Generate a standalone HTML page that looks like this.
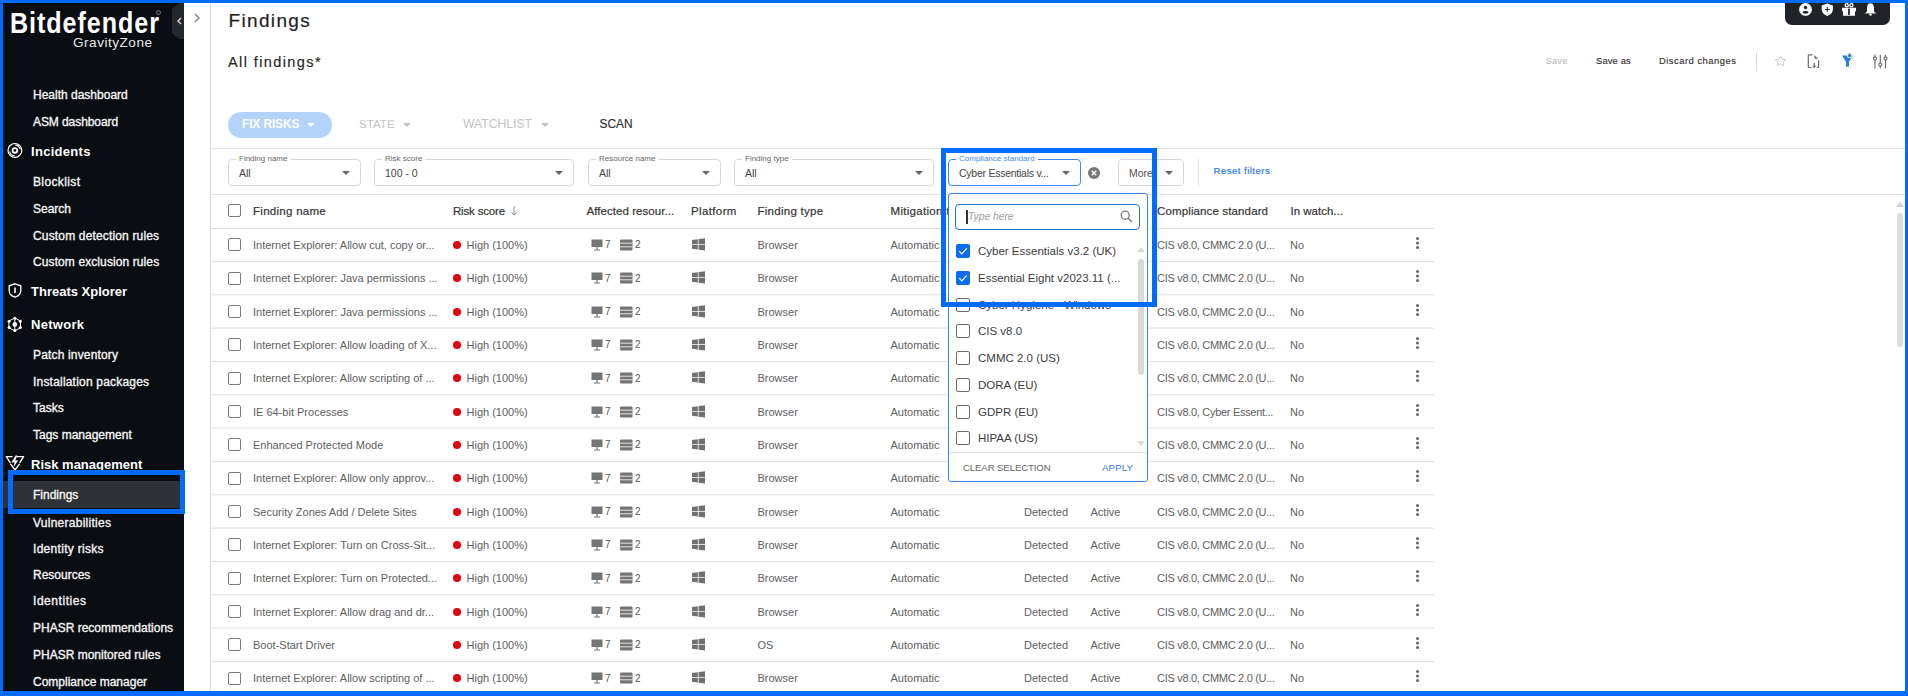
<!DOCTYPE html>
<html><head><meta charset="utf-8">
<style>
*{margin:0;padding:0;box-sizing:border-box}
html,body{width:1908px;height:696px;overflow:hidden;background:#fff;font-family:"Liberation Sans",sans-serif}
.a{position:absolute;white-space:nowrap}
#frame{position:absolute;left:0;top:0;width:1908px;height:696px;border-style:solid;border-color:#006cff;border-width:3px 3px 5px 3px;z-index:50;pointer-events:none}
#side{position:absolute;left:0;top:0;width:184px;height:696px;background:#0a0d12}
.si{position:absolute;left:33px;height:16px;line-height:16px;font-size:12px;color:#f4f4f4;white-space:nowrap;-webkit-text-stroke:0.35px #f4f4f4}
.sh{position:absolute;left:31px;height:18px;line-height:18px;font-size:13px;font-weight:bold;color:#fff;white-space:nowrap}
.ic{position:absolute}
.hl{position:absolute;border:5px solid #006cff;z-index:40}
.row{position:absolute;left:211px;width:1223px;height:34px;border-bottom:1px solid #e3e3e3}
.t{position:absolute;height:16px;line-height:16px;font-size:11px;color:#606060;white-space:nowrap}
.th{position:absolute;height:16px;line-height:16px;font-size:11.5px;color:#333;-webkit-text-stroke:0.2px #333;white-space:nowrap}
.cb{position:absolute;width:13px;height:13px;border:1.5px solid #7a7a7a;border-radius:2px;background:#fff}
.fs{position:absolute;top:159px;height:27px;border:1px solid #d6d6d6;border-radius:4px;background:#fff}
.fl{position:absolute;top:-6px;left:7px;padding:0 3px;background:#fff;font-size:8px;line-height:10px;color:#666;white-space:nowrap}
.fv{position:absolute;left:10px;top:6px;font-size:10.5px;line-height:14px;color:#444;white-space:nowrap}
.arr{position:absolute;width:0;height:0;border-left:5px solid transparent;border-right:5px solid transparent;border-top:5px solid #555}
</style></head><body>

<div id="frame"></div>
<div id="side">
<div class="a" style="left:10px;top:5px;font-size:29.5px;line-height:36px;font-weight:bold;color:#fff;letter-spacing:1.1px;transform:scaleX(0.852);transform-origin:0 0">Bitdefender</div>
<div class="a" style="left:156px;top:10px;width:5px;height:5px;border:0.7px solid #777;border-radius:50%"></div>
<div class="a" style="left:73px;top:34.3px;font-size:13.6px;line-height:18px;color:#e6e6e6;letter-spacing:0.5px">GravityZone</div>
<svg class="ic" style="left:172px;top:3px" width="12" height="36" viewBox="0 0 12 36"><path d="M12 0 L12 36 L7 36 L0 30 L0 6 L7 0 Z" fill="#24272c"/><path d="M9 15 L6 18 L9 21" stroke="#c8c8c8" stroke-width="1.6" fill="none"/></svg>
<div class="si" style="top:86.7px">Health dashboard</div>
<div class="si" style="top:113.5px;letter-spacing:-0.08px">ASM dashboard</div>
<div class="sh" style="top:142.5px;letter-spacing:0.3px">Incidents</div>
<div class="si" style="top:174.3px;letter-spacing:0.37px">Blocklist</div>
<div class="si" style="top:200.9px">Search</div>
<div class="si" style="top:227.5px;letter-spacing:0.16px">Custom detection rules</div>
<div class="si" style="top:254.1px;letter-spacing:0.1px">Custom exclusion rules</div>
<div class="sh" style="top:282.5px">Threats Xplorer</div>
<div class="sh" style="top:316.4px;letter-spacing:0.3px">Network</div>
<div class="si" style="top:347.0px;letter-spacing:0.16px">Patch inventory</div>
<div class="si" style="top:373.7px;letter-spacing:0.2px">Installation packages</div>
<div class="si" style="top:400.4px">Tasks</div>
<div class="si" style="top:427.1px">Tags management</div>
<div class="sh" style="top:456.2px">Risk management</div>
<div class="a" style="left:0;top:481px;width:184px;height:27px;background:#2e3135"></div>
<div class="si" style="top:486.6px">Findings</div>
<div class="si" style="top:514.7px;letter-spacing:0.26px">Vulnerabilities</div>
<div class="si" style="top:540.5px;letter-spacing:0.3px">Identity risks</div>
<div class="si" style="top:566.7px">Resources</div>
<div class="si" style="top:593.4px;letter-spacing:0.55px">Identities</div>
<div class="si" style="top:620.1px">PHASR recommendations</div>
<div class="si" style="top:646.8px">PHASR monitored rules</div>
<div class="si" style="top:673.5px">Compliance manager</div>
<svg class="ic" style="left:3px;top:138px" width="25" height="25" viewBox="3 138 25 25"><circle cx="14.9" cy="150.4" r="6.9" stroke="#fff" stroke-width="1.2" fill="none"/><circle cx="14.9" cy="150.4" r="2.35" stroke="#fff" stroke-width="1.8" fill="none"/><path d="M9.6 151.5 A5.3 5.3 0 0 0 14.6 155.7" stroke="#fff" stroke-width="1.2" fill="none"/><path d="M20.2 149.3 A5.3 5.3 0 0 0 15.2 145.1" stroke="#fff" stroke-width="1.2" fill="none"/></svg>
<svg class="ic" style="left:8px;top:283px" width="14" height="15" viewBox="0 0 14 15"><path d="M7 0.8 L12.8 2.8 L12.8 7.5 C12.8 10.8 10.2 13.2 7 14.2 C3.8 13.2 1.2 10.8 1.2 7.5 L1.2 2.8 Z" stroke="#fff" stroke-width="1.3" fill="none"/><path d="M7 4.5 L7 10" stroke="#fff" stroke-width="1.6"/></svg>
<svg class="ic" style="left:4px;top:313px" width="22" height="22" viewBox="4 313 22 22"><path d="M14.8 317.9 L20.5 321.1 L20.5 327.7 L14.8 330.9 L8.9 327.7 L8.9 321.1 Z M14.8 317.9 L14.8 330.9" stroke="#fff" stroke-width="1" fill="none"/><circle cx="14.8" cy="324.4" r="2.3" fill="#fff"/><circle cx="14.8" cy="318.2" r="1.5" fill="#fff"/><circle cx="20.3" cy="321.3" r="1.5" fill="#fff"/><circle cx="20.3" cy="327.5" r="1.5" fill="#fff"/><circle cx="14.8" cy="330.6" r="1.5" fill="#fff"/><circle cx="9.1" cy="327.5" r="1.5" fill="#fff"/><circle cx="9.1" cy="321.3" r="1.5" fill="#fff"/></svg>
<svg class="ic" style="left:3px;top:450px" width="25" height="25" viewBox="3 450 25 25"><path d="M6.4 456.6 L11.9 456.6 M17.6 456.6 L23.5 456.6 M6.6 457 L9.9 462.2 M10.8 464.3 L15 469.8 L19.2 464.3 M20.1 462.2 L23.3 457" stroke="#fff" stroke-width="1.35" fill="none" stroke-linecap="square"/><path d="M15.6 455.6 L11.4 462.4 L14.6 462.2 L13.4 467.4 L18.2 460.3 L15.2 460.4 L17.3 455.6 Z" fill="#fff"/></svg>
</div>
<div class="hl" style="left:8px;top:470px;width:177px;height:44px"></div>
<div class="a" style="left:210px;top:0;width:1px;height:696px;background:#dcdcdc"></div>
<svg class="ic" style="left:193px;top:13px" width="8" height="10" viewBox="0 0 8 10"><path d="M2 1 L6 5 L2 9" stroke="#8a8a8a" stroke-width="1.5" fill="none"/></svg>
<div class="a" style="left:228.5px;top:8.3px;font-size:19px;line-height:26px;color:#1f1f1f;letter-spacing:1.35px;-webkit-text-stroke:0.2px #1f1f1f">Findings</div>
<div class="a" style="left:228px;top:51.5px;font-size:14.5px;line-height:20px;color:#1f1f1f;letter-spacing:1.4px;-webkit-text-stroke:0.15px #1f1f1f">All findings*</div>
<div class="a" style="left:1545.5px;top:53.6px;font-size:9.4px;line-height:14px;color:#b4b4b4;letter-spacing:0.2px">Save</div>
<div class="a" style="left:1596px;top:53.6px;font-size:9.4px;line-height:14px;color:#333;letter-spacing:0.15px;-webkit-text-stroke:0.15px #333">Save as</div>
<div class="a" style="left:1659px;top:53.6px;font-size:9.4px;line-height:14px;color:#333;letter-spacing:0.5px;-webkit-text-stroke:0.15px #333">Discard changes</div>
<div class="a" style="left:1756px;top:53px;width:1px;height:18px;background:#d8d8d8"></div>
<svg class="ic" style="left:1774px;top:55px" width="13" height="12" viewBox="0 0 13 12"><path d="M6.5 0.8 L8.1 4.3 L11.9 4.6 L9 7.1 L9.9 10.9 L6.5 8.9 L3.1 10.9 L4 7.1 L1.1 4.6 L4.9 4.3 Z" stroke="#c6c6c6" stroke-width="0.9" fill="none"/></svg>
<svg class="ic" style="left:1804px;top:50px" width="20" height="20" viewBox="1804 50 20 20"><path d="M1812.6 54.9 L1808.9 54.9 Q1808.3 54.9 1808.3 55.5 L1808.3 66.9 Q1808.3 67.5 1808.9 67.5 L1811.6 67.5 M1818.6 60.2 L1818.6 66.9 Q1818.6 67.5 1818 67.5 L1817 67.5" stroke="#6e6e6e" stroke-width="1.2" fill="none"/><path d="M1814.1 55.1 L1818.5 58.8 L1814.6 58.8 Z" fill="#6e6e6e"/><path d="M1814.3 63 L1814.3 66.5" stroke="#6e6e6e" stroke-width="1.3"/><path d="M1812.4 65.8 L1816.2 65.8 L1814.3 68.6 Z" fill="#6e6e6e"/></svg>
<svg class="ic" style="left:1838px;top:50px" width="20" height="20" viewBox="1838 50 20 20"><path d="M1842 55.5 L1853 55.5 L1849 61.8 L1849 66.8 L1846 66.8 L1846 61.8 Z" fill="#2a7de1"/><path d="M1847.1 55.2 A2.5 2.5 0 0 0 1852.1 55.2" stroke="#fff" stroke-width="1" fill="none"/><circle cx="1849.6" cy="55.1" r="1.5" fill="#2a7de1"/></svg>
<svg class="ic" style="left:1873px;top:54px" width="15" height="15" viewBox="0 0 15 15"><path d="M2 0.8 L2 14.5 M7.3 0.8 L7.3 14.5 M12.5 0.8 L12.5 14.5" stroke="#6a6a6a" stroke-width="1.15"/><circle cx="2" cy="4.4" r="1.55" fill="#fff" stroke="#6a6a6a" stroke-width="1.1"/><circle cx="7.3" cy="10.6" r="1.55" fill="#fff" stroke="#6a6a6a" stroke-width="1.1"/><circle cx="12.5" cy="4.4" r="1.55" fill="#fff" stroke="#6a6a6a" stroke-width="1.1"/></svg>
<div class="a" style="left:1785px;top:0;width:105px;height:25px;background:#202328;border-radius:0 0 7px 7px"></div>
<svg class="ic" style="left:1790px;top:0px" width="95" height="22" viewBox="1790 0 95 22"><circle cx="1805.5" cy="9.45" r="6.4" fill="#fff"/><circle cx="1805.5" cy="7.5" r="1.7" fill="#202328"/><ellipse cx="1805.5" cy="12.3" rx="2.9" ry="1.35" fill="#202328"/><path d="M1827.3 3.6 L1832.9 5.4 L1832.9 9.6 C1832.9 12.6 1830.6 14.9 1827.3 15.9 C1824 14.9 1821.7 12.6 1821.7 9.6 L1821.7 5.4 Z" fill="#fff"/><path d="M1827.3 7 L1827.3 12 M1824.9 9.5 L1829.7 9.5" stroke="#202328" stroke-width="1"/><path d="M1842 7.8 L1856 7.8 L1856 11.2 L1855 11.2 L1855 15.8 L1843 15.8 L1843 11.2 L1842 11.2 Z" fill="#fff"/><rect x="1848.1" y="8.6" width="1.8" height="6.3" fill="#202328"/><circle cx="1846.7" cy="5.3" r="1.6" stroke="#fff" stroke-width="1.3" fill="none"/><circle cx="1851.4" cy="5.3" r="1.6" stroke="#fff" stroke-width="1.3" fill="none"/><path d="M1870.5 3.3 C1867.6 3.3 1867 6.5 1867 8.5 L1867 11.3 L1865 13.5 L1876 13.5 L1874 11.3 L1874 8.5 C1874 6.5 1873.4 3.3 1870.5 3.3 Z" fill="#fff"/><circle cx="1870.5" cy="14.6" r="1.2" fill="#fff"/></svg>
<div class="a" style="left:228px;top:112px;width:104px;height:26px;background:#b3d3fb;border-radius:13px"></div>
<div class="a" style="left:242px;top:115px;font-size:11.9px;line-height:18px;font-weight:bold;color:#fff;letter-spacing:-0.1px">FIX RISKS</div>
<div class="arr" style="left:307px;top:123px;border-top-color:#fff;border-left-width:4px;border-right-width:4px;border-top-width:4px"></div>
<div class="a" style="left:359px;top:115px;font-size:11.6px;line-height:18px;color:#c2c2c2">STATE</div>
<div class="arr" style="left:403px;top:123px;border-top-color:#c2c2c2;border-left-width:4px;border-right-width:4px;border-top-width:4px"></div>
<div class="a" style="left:463px;top:115px;font-size:12.2px;line-height:18px;color:#c2c2c2">WATCHLIST</div>
<div class="arr" style="left:541px;top:123px;border-top-color:#c2c2c2;border-left-width:4px;border-right-width:4px;border-top-width:4px"></div>
<div class="a" style="left:599.5px;top:115px;font-size:11.9px;line-height:18px;color:#333;-webkit-text-stroke:0.2px #333">SCAN</div>
<div class="a" style="left:211px;top:148px;width:1694px;height:1px;background:#e2e2e2"></div>
<div class="a" style="left:211px;top:194px;width:1694px;height:1px;background:#e2e2e2"></div>
<div class="fs" style="left:228px;width:133px;border-color:#d6d6d6"><div class="fl" style="color:#666">Finding name</div><div class="fv">All</div><div class="arr" style="left:113px;top:11px;border-left-width:4.5px;border-right-width:4.5px;border-top-width:4.5px;border-top-color:#666"></div></div>
<div class="fs" style="left:374px;width:200px;border-color:#d6d6d6"><div class="fl" style="color:#666">Risk score</div><div class="fv">100 - 0</div><div class="arr" style="left:180px;top:11px;border-left-width:4.5px;border-right-width:4.5px;border-top-width:4.5px;border-top-color:#666"></div></div>
<div class="fs" style="left:588px;width:133px;border-color:#d6d6d6"><div class="fl" style="color:#666">Resource name</div><div class="fv">All</div><div class="arr" style="left:113px;top:11px;border-left-width:4.5px;border-right-width:4.5px;border-top-width:4.5px;border-top-color:#666"></div></div>
<div class="fs" style="left:734px;width:200px;border-color:#d6d6d6"><div class="fl" style="color:#666">Finding type</div><div class="fv">All</div><div class="arr" style="left:180px;top:11px;border-left-width:4.5px;border-right-width:4.5px;border-top-width:4.5px;border-top-color:#666"></div></div>
<div class="fs" style="left:1118px;width:66px;border-color:#d6d6d6"><div class="fl" style="color:#666"></div><div class="fv" style="color:#555">More</div><div class="arr" style="left:46px;top:11px;border-left-width:4.5px;border-right-width:4.5px;border-top-width:4.5px;border-top-color:#666"></div></div>
<div class="fs" style="left:948px;width:133px;border-color:#3d8ae8"><div class="fl" style="color:#3d8ae8">Compliance standard</div><div class="fv" style="letter-spacing:-0.25px">Cyber Essentials v...</div><div class="arr" style="left:113px;top:11px;border-left-width:4.5px;border-right-width:4.5px;border-top-width:4.5px;border-top-color:#666"></div></div>
<svg class="ic" style="left:1088px;top:167px" width="12" height="12" viewBox="0 0 12 12"><circle cx="6" cy="6" r="6" fill="#777"/><path d="M3.8 3.8 L8.2 8.2 M8.2 3.8 L3.8 8.2" stroke="#fff" stroke-width="1.5"/></svg>
<div class="a" style="left:1198px;top:159px;width:1px;height:27px;background:#e0e0e0"></div>
<div class="a" style="left:1213.5px;top:163px;font-size:9.7px;line-height:15px;color:#1f74f2;letter-spacing:0.43px;-webkit-text-stroke:0.15px #1f74f2">Reset filters</div>
<div class="cb" style="left:228px;top:204px"></div>
<div class="th" style="left:253px;top:203px;letter-spacing:0.28px">Finding name</div>
<div class="th" style="left:453px;top:203px;letter-spacing:-0.18px">Risk score</div>
<div class="th" style="left:586.5px;top:203px;letter-spacing:0.05px">Affected resour...</div>
<div class="th" style="left:691px;top:203px;letter-spacing:0.37px">Platform</div>
<div class="th" style="left:757.5px;top:203px;letter-spacing:0.27px">Finding type</div>
<div class="th" style="left:890.5px;top:203px;letter-spacing:0.3px">Mitigation type</div>
<div class="th" style="left:1024px;top:203px;letter-spacing:0px">Detection</div>
<div class="th" style="left:1090px;top:203px;letter-spacing:0px">State</div>
<div class="th" style="left:1157px;top:203px;letter-spacing:0.13px">Compliance standard</div>
<div class="th" style="left:1290.5px;top:203px;letter-spacing:0px">In watch...</div>
<svg class="ic" style="left:508px;top:204px" width="12" height="14" viewBox="508 204 12 14"><path d="M514 206.3 L514 215 M511.7 212.6 L514 215.2 L516.3 212.6" stroke="#8a8a8a" stroke-width="1" fill="none"/></svg>
<div class="a" style="left:211px;top:228px;width:1223px;height:1px;background:rgba(200,200,200,0.62)"></div>
<div class="cb" style="left:228px;top:238.4px"></div>
<div class="t" style="left:253px;top:236.9px">Internet Explorer: Allow cut, copy or...</div>
<div class="a" style="left:453px;top:240.9px;width:8px;height:8px;border-radius:50%;background:#e40010"></div>
<div class="t" style="left:466.5px;top:236.9px">High (100%)</div>
<svg class="ic" style="left:591px;top:238.9px" width="50" height="12" viewBox="0 0 50 12"><rect x="0.5" y="0.5" width="11" height="7.5" fill="#747474"/><path d="M6 8 L6 10.5 M3 11 L9 11" stroke="#747474" stroke-width="1.2"/><rect x="29" y="0.5" width="12.5" height="11" rx="1" fill="#747474"/><path d="M29 4.2 L41.5 4.2 M29 7.8 L41.5 7.8" stroke="#fff" stroke-width="0.8"/></svg>
<div class="t" style="left:605px;top:237.4px;font-size:10px;color:#555">7</div>
<div class="t" style="left:635px;top:237.4px;font-size:10px;color:#555">2</div>
<svg class="ic" style="left:692px;top:237.9px" width="13" height="13" viewBox="0 0 13 13"><path d="M0 2 L5.8 1.2 L5.8 6 L0 6 Z M6.6 1.1 L13 0.2 L13 6 L6.6 6 Z M0 6.8 L5.8 6.8 L5.8 11.6 L0 10.8 Z M6.6 6.8 L13 6.8 L13 12.6 L6.6 11.7 Z" fill="#707070"/></svg>
<div class="t" style="left:757.5px;top:236.9px">Browser</div>
<div class="t" style="left:890.5px;top:236.9px">Automatic</div>
<div class="t" style="left:1157px;top:236.9px;letter-spacing:-0.3px">CIS v8.0, CMMC 2.0 (U...</div>
<div class="t" style="left:1290px;top:236.9px">No</div>
<svg class="ic" style="left:1414.5px;top:234.9px" width="5" height="16" viewBox="0 0 5 16"><circle cx="2.5" cy="3.5" r="1.55" fill="#6a6a6a"/><circle cx="2.5" cy="8" r="1.55" fill="#6a6a6a"/><circle cx="2.5" cy="12.5" r="1.55" fill="#6a6a6a"/></svg>
<div class="a" style="left:211px;top:260px;width:1223px;height:1px;background:rgba(200,200,200,0.04)"></div>
<div class="a" style="left:211px;top:261px;width:1223px;height:1px;background:rgba(200,200,200,0.58)"></div>
<div class="cb" style="left:228px;top:271.8px"></div>
<div class="t" style="left:253px;top:270.3px">Internet Explorer: Java permissions ...</div>
<div class="a" style="left:453px;top:274.3px;width:8px;height:8px;border-radius:50%;background:#e40010"></div>
<div class="t" style="left:466.5px;top:270.3px">High (100%)</div>
<svg class="ic" style="left:591px;top:272.3px" width="50" height="12" viewBox="0 0 50 12"><rect x="0.5" y="0.5" width="11" height="7.5" fill="#747474"/><path d="M6 8 L6 10.5 M3 11 L9 11" stroke="#747474" stroke-width="1.2"/><rect x="29" y="0.5" width="12.5" height="11" rx="1" fill="#747474"/><path d="M29 4.2 L41.5 4.2 M29 7.8 L41.5 7.8" stroke="#fff" stroke-width="0.8"/></svg>
<div class="t" style="left:605px;top:270.8px;font-size:10px;color:#555">7</div>
<div class="t" style="left:635px;top:270.8px;font-size:10px;color:#555">2</div>
<svg class="ic" style="left:692px;top:271.3px" width="13" height="13" viewBox="0 0 13 13"><path d="M0 2 L5.8 1.2 L5.8 6 L0 6 Z M6.6 1.1 L13 0.2 L13 6 L6.6 6 Z M0 6.8 L5.8 6.8 L5.8 11.6 L0 10.8 Z M6.6 6.8 L13 6.8 L13 12.6 L6.6 11.7 Z" fill="#707070"/></svg>
<div class="t" style="left:757.5px;top:270.3px">Browser</div>
<div class="t" style="left:890.5px;top:270.3px">Automatic</div>
<div class="t" style="left:1157px;top:270.3px;letter-spacing:-0.3px">CIS v8.0, CMMC 2.0 (U...</div>
<div class="t" style="left:1290px;top:270.3px">No</div>
<svg class="ic" style="left:1414.5px;top:268.3px" width="5" height="16" viewBox="0 0 5 16"><circle cx="2.5" cy="3.5" r="1.55" fill="#6a6a6a"/><circle cx="2.5" cy="8" r="1.55" fill="#6a6a6a"/><circle cx="2.5" cy="12.5" r="1.55" fill="#6a6a6a"/></svg>
<div class="a" style="left:211px;top:294px;width:1223px;height:1px;background:rgba(200,200,200,0.46)"></div>
<div class="a" style="left:211px;top:295px;width:1223px;height:1px;background:rgba(200,200,200,0.16)"></div>
<div class="cb" style="left:228px;top:305.1px"></div>
<div class="t" style="left:253px;top:303.6px">Internet Explorer: Java permissions ...</div>
<div class="a" style="left:453px;top:307.6px;width:8px;height:8px;border-radius:50%;background:#e40010"></div>
<div class="t" style="left:466.5px;top:303.6px">High (100%)</div>
<svg class="ic" style="left:591px;top:305.6px" width="50" height="12" viewBox="0 0 50 12"><rect x="0.5" y="0.5" width="11" height="7.5" fill="#747474"/><path d="M6 8 L6 10.5 M3 11 L9 11" stroke="#747474" stroke-width="1.2"/><rect x="29" y="0.5" width="12.5" height="11" rx="1" fill="#747474"/><path d="M29 4.2 L41.5 4.2 M29 7.8 L41.5 7.8" stroke="#fff" stroke-width="0.8"/></svg>
<div class="t" style="left:605px;top:304.1px;font-size:10px;color:#555">7</div>
<div class="t" style="left:635px;top:304.1px;font-size:10px;color:#555">2</div>
<svg class="ic" style="left:692px;top:304.6px" width="13" height="13" viewBox="0 0 13 13"><path d="M0 2 L5.8 1.2 L5.8 6 L0 6 Z M6.6 1.1 L13 0.2 L13 6 L6.6 6 Z M0 6.8 L5.8 6.8 L5.8 11.6 L0 10.8 Z M6.6 6.8 L13 6.8 L13 12.6 L6.6 11.7 Z" fill="#707070"/></svg>
<div class="t" style="left:757.5px;top:303.6px">Browser</div>
<div class="t" style="left:890.5px;top:303.6px">Automatic</div>
<div class="t" style="left:1157px;top:303.6px;letter-spacing:-0.3px">CIS v8.0, CMMC 2.0 (U...</div>
<div class="t" style="left:1290px;top:303.6px">No</div>
<svg class="ic" style="left:1414.5px;top:301.6px" width="5" height="16" viewBox="0 0 5 16"><circle cx="2.5" cy="3.5" r="1.55" fill="#6a6a6a"/><circle cx="2.5" cy="8" r="1.55" fill="#6a6a6a"/><circle cx="2.5" cy="12.5" r="1.55" fill="#6a6a6a"/></svg>
<div class="a" style="left:211px;top:327px;width:1223px;height:1px;background:rgba(200,200,200,0.25)"></div>
<div class="a" style="left:211px;top:328px;width:1223px;height:1px;background:rgba(200,200,200,0.37)"></div>
<div class="cb" style="left:228px;top:338.4px"></div>
<div class="t" style="left:253px;top:336.9px">Internet Explorer: Allow loading of X...</div>
<div class="a" style="left:453px;top:340.9px;width:8px;height:8px;border-radius:50%;background:#e40010"></div>
<div class="t" style="left:466.5px;top:336.9px">High (100%)</div>
<svg class="ic" style="left:591px;top:338.9px" width="50" height="12" viewBox="0 0 50 12"><rect x="0.5" y="0.5" width="11" height="7.5" fill="#747474"/><path d="M6 8 L6 10.5 M3 11 L9 11" stroke="#747474" stroke-width="1.2"/><rect x="29" y="0.5" width="12.5" height="11" rx="1" fill="#747474"/><path d="M29 4.2 L41.5 4.2 M29 7.8 L41.5 7.8" stroke="#fff" stroke-width="0.8"/></svg>
<div class="t" style="left:605px;top:337.4px;font-size:10px;color:#555">7</div>
<div class="t" style="left:635px;top:337.4px;font-size:10px;color:#555">2</div>
<svg class="ic" style="left:692px;top:337.9px" width="13" height="13" viewBox="0 0 13 13"><path d="M0 2 L5.8 1.2 L5.8 6 L0 6 Z M6.6 1.1 L13 0.2 L13 6 L6.6 6 Z M0 6.8 L5.8 6.8 L5.8 11.6 L0 10.8 Z M6.6 6.8 L13 6.8 L13 12.6 L6.6 11.7 Z" fill="#707070"/></svg>
<div class="t" style="left:757.5px;top:336.9px">Browser</div>
<div class="t" style="left:890.5px;top:336.9px">Automatic</div>
<div class="t" style="left:1157px;top:336.9px;letter-spacing:-0.3px">CIS v8.0, CMMC 2.0 (U...</div>
<div class="t" style="left:1290px;top:336.9px">No</div>
<svg class="ic" style="left:1414.5px;top:334.9px" width="5" height="16" viewBox="0 0 5 16"><circle cx="2.5" cy="3.5" r="1.55" fill="#6a6a6a"/><circle cx="2.5" cy="8" r="1.55" fill="#6a6a6a"/><circle cx="2.5" cy="12.5" r="1.55" fill="#6a6a6a"/></svg>
<div class="a" style="left:211px;top:360px;width:1223px;height:1px;background:rgba(200,200,200,0.04)"></div>
<div class="a" style="left:211px;top:361px;width:1223px;height:1px;background:rgba(200,200,200,0.58)"></div>
<div class="cb" style="left:228px;top:371.7px"></div>
<div class="t" style="left:253px;top:370.2px">Internet Explorer: Allow scripting of ...</div>
<div class="a" style="left:453px;top:374.2px;width:8px;height:8px;border-radius:50%;background:#e40010"></div>
<div class="t" style="left:466.5px;top:370.2px">High (100%)</div>
<svg class="ic" style="left:591px;top:372.2px" width="50" height="12" viewBox="0 0 50 12"><rect x="0.5" y="0.5" width="11" height="7.5" fill="#747474"/><path d="M6 8 L6 10.5 M3 11 L9 11" stroke="#747474" stroke-width="1.2"/><rect x="29" y="0.5" width="12.5" height="11" rx="1" fill="#747474"/><path d="M29 4.2 L41.5 4.2 M29 7.8 L41.5 7.8" stroke="#fff" stroke-width="0.8"/></svg>
<div class="t" style="left:605px;top:370.7px;font-size:10px;color:#555">7</div>
<div class="t" style="left:635px;top:370.7px;font-size:10px;color:#555">2</div>
<svg class="ic" style="left:692px;top:371.2px" width="13" height="13" viewBox="0 0 13 13"><path d="M0 2 L5.8 1.2 L5.8 6 L0 6 Z M6.6 1.1 L13 0.2 L13 6 L6.6 6 Z M0 6.8 L5.8 6.8 L5.8 11.6 L0 10.8 Z M6.6 6.8 L13 6.8 L13 12.6 L6.6 11.7 Z" fill="#707070"/></svg>
<div class="t" style="left:757.5px;top:370.2px">Browser</div>
<div class="t" style="left:890.5px;top:370.2px">Automatic</div>
<div class="t" style="left:1157px;top:370.2px;letter-spacing:-0.3px">CIS v8.0, CMMC 2.0 (U...</div>
<div class="t" style="left:1290px;top:370.2px">No</div>
<svg class="ic" style="left:1414.5px;top:368.2px" width="5" height="16" viewBox="0 0 5 16"><circle cx="2.5" cy="3.5" r="1.55" fill="#6a6a6a"/><circle cx="2.5" cy="8" r="1.55" fill="#6a6a6a"/><circle cx="2.5" cy="12.5" r="1.55" fill="#6a6a6a"/></svg>
<div class="a" style="left:211px;top:394px;width:1223px;height:1px;background:rgba(200,200,200,0.46)"></div>
<div class="a" style="left:211px;top:395px;width:1223px;height:1px;background:rgba(200,200,200,0.16)"></div>
<div class="cb" style="left:228px;top:405.1px"></div>
<div class="t" style="left:253px;top:403.6px">IE 64-bit Processes</div>
<div class="a" style="left:453px;top:407.6px;width:8px;height:8px;border-radius:50%;background:#e40010"></div>
<div class="t" style="left:466.5px;top:403.6px">High (100%)</div>
<svg class="ic" style="left:591px;top:405.6px" width="50" height="12" viewBox="0 0 50 12"><rect x="0.5" y="0.5" width="11" height="7.5" fill="#747474"/><path d="M6 8 L6 10.5 M3 11 L9 11" stroke="#747474" stroke-width="1.2"/><rect x="29" y="0.5" width="12.5" height="11" rx="1" fill="#747474"/><path d="M29 4.2 L41.5 4.2 M29 7.8 L41.5 7.8" stroke="#fff" stroke-width="0.8"/></svg>
<div class="t" style="left:605px;top:404.1px;font-size:10px;color:#555">7</div>
<div class="t" style="left:635px;top:404.1px;font-size:10px;color:#555">2</div>
<svg class="ic" style="left:692px;top:404.6px" width="13" height="13" viewBox="0 0 13 13"><path d="M0 2 L5.8 1.2 L5.8 6 L0 6 Z M6.6 1.1 L13 0.2 L13 6 L6.6 6 Z M0 6.8 L5.8 6.8 L5.8 11.6 L0 10.8 Z M6.6 6.8 L13 6.8 L13 12.6 L6.6 11.7 Z" fill="#707070"/></svg>
<div class="t" style="left:757.5px;top:403.6px">Browser</div>
<div class="t" style="left:890.5px;top:403.6px">Automatic</div>
<div class="t" style="left:1157px;top:403.6px;letter-spacing:-0.3px">CIS v8.0, Cyber Essent...</div>
<div class="t" style="left:1290px;top:403.6px">No</div>
<svg class="ic" style="left:1414.5px;top:401.6px" width="5" height="16" viewBox="0 0 5 16"><circle cx="2.5" cy="3.5" r="1.55" fill="#6a6a6a"/><circle cx="2.5" cy="8" r="1.55" fill="#6a6a6a"/><circle cx="2.5" cy="12.5" r="1.55" fill="#6a6a6a"/></svg>
<div class="a" style="left:211px;top:427px;width:1223px;height:1px;background:rgba(200,200,200,0.25)"></div>
<div class="a" style="left:211px;top:428px;width:1223px;height:1px;background:rgba(200,200,200,0.37)"></div>
<div class="cb" style="left:228px;top:438.4px"></div>
<div class="t" style="left:253px;top:436.9px">Enhanced Protected Mode</div>
<div class="a" style="left:453px;top:440.9px;width:8px;height:8px;border-radius:50%;background:#e40010"></div>
<div class="t" style="left:466.5px;top:436.9px">High (100%)</div>
<svg class="ic" style="left:591px;top:438.9px" width="50" height="12" viewBox="0 0 50 12"><rect x="0.5" y="0.5" width="11" height="7.5" fill="#747474"/><path d="M6 8 L6 10.5 M3 11 L9 11" stroke="#747474" stroke-width="1.2"/><rect x="29" y="0.5" width="12.5" height="11" rx="1" fill="#747474"/><path d="M29 4.2 L41.5 4.2 M29 7.8 L41.5 7.8" stroke="#fff" stroke-width="0.8"/></svg>
<div class="t" style="left:605px;top:437.4px;font-size:10px;color:#555">7</div>
<div class="t" style="left:635px;top:437.4px;font-size:10px;color:#555">2</div>
<svg class="ic" style="left:692px;top:437.9px" width="13" height="13" viewBox="0 0 13 13"><path d="M0 2 L5.8 1.2 L5.8 6 L0 6 Z M6.6 1.1 L13 0.2 L13 6 L6.6 6 Z M0 6.8 L5.8 6.8 L5.8 11.6 L0 10.8 Z M6.6 6.8 L13 6.8 L13 12.6 L6.6 11.7 Z" fill="#707070"/></svg>
<div class="t" style="left:757.5px;top:436.9px">Browser</div>
<div class="t" style="left:890.5px;top:436.9px">Automatic</div>
<div class="t" style="left:1157px;top:436.9px;letter-spacing:-0.3px">CIS v8.0, CMMC 2.0 (U...</div>
<div class="t" style="left:1290px;top:436.9px">No</div>
<svg class="ic" style="left:1414.5px;top:434.9px" width="5" height="16" viewBox="0 0 5 16"><circle cx="2.5" cy="3.5" r="1.55" fill="#6a6a6a"/><circle cx="2.5" cy="8" r="1.55" fill="#6a6a6a"/><circle cx="2.5" cy="12.5" r="1.55" fill="#6a6a6a"/></svg>
<div class="a" style="left:211px;top:460px;width:1223px;height:1px;background:rgba(200,200,200,0.04)"></div>
<div class="a" style="left:211px;top:461px;width:1223px;height:1px;background:rgba(200,200,200,0.58)"></div>
<div class="cb" style="left:228px;top:471.7px"></div>
<div class="t" style="left:253px;top:470.2px">Internet Explorer: Allow only approv...</div>
<div class="a" style="left:453px;top:474.2px;width:8px;height:8px;border-radius:50%;background:#e40010"></div>
<div class="t" style="left:466.5px;top:470.2px">High (100%)</div>
<svg class="ic" style="left:591px;top:472.2px" width="50" height="12" viewBox="0 0 50 12"><rect x="0.5" y="0.5" width="11" height="7.5" fill="#747474"/><path d="M6 8 L6 10.5 M3 11 L9 11" stroke="#747474" stroke-width="1.2"/><rect x="29" y="0.5" width="12.5" height="11" rx="1" fill="#747474"/><path d="M29 4.2 L41.5 4.2 M29 7.8 L41.5 7.8" stroke="#fff" stroke-width="0.8"/></svg>
<div class="t" style="left:605px;top:470.7px;font-size:10px;color:#555">7</div>
<div class="t" style="left:635px;top:470.7px;font-size:10px;color:#555">2</div>
<svg class="ic" style="left:692px;top:471.2px" width="13" height="13" viewBox="0 0 13 13"><path d="M0 2 L5.8 1.2 L5.8 6 L0 6 Z M6.6 1.1 L13 0.2 L13 6 L6.6 6 Z M0 6.8 L5.8 6.8 L5.8 11.6 L0 10.8 Z M6.6 6.8 L13 6.8 L13 12.6 L6.6 11.7 Z" fill="#707070"/></svg>
<div class="t" style="left:757.5px;top:470.2px">Browser</div>
<div class="t" style="left:890.5px;top:470.2px">Automatic</div>
<div class="t" style="left:1157px;top:470.2px;letter-spacing:-0.3px">CIS v8.0, CMMC 2.0 (U...</div>
<div class="t" style="left:1290px;top:470.2px">No</div>
<svg class="ic" style="left:1414.5px;top:468.2px" width="5" height="16" viewBox="0 0 5 16"><circle cx="2.5" cy="3.5" r="1.55" fill="#6a6a6a"/><circle cx="2.5" cy="8" r="1.55" fill="#6a6a6a"/><circle cx="2.5" cy="12.5" r="1.55" fill="#6a6a6a"/></svg>
<div class="a" style="left:211px;top:494px;width:1223px;height:1px;background:rgba(200,200,200,0.46)"></div>
<div class="a" style="left:211px;top:495px;width:1223px;height:1px;background:rgba(200,200,200,0.16)"></div>
<div class="cb" style="left:228px;top:505.0px"></div>
<div class="t" style="left:253px;top:503.5px">Security Zones Add / Delete Sites</div>
<div class="a" style="left:453px;top:507.5px;width:8px;height:8px;border-radius:50%;background:#e40010"></div>
<div class="t" style="left:466.5px;top:503.5px">High (100%)</div>
<svg class="ic" style="left:591px;top:505.5px" width="50" height="12" viewBox="0 0 50 12"><rect x="0.5" y="0.5" width="11" height="7.5" fill="#747474"/><path d="M6 8 L6 10.5 M3 11 L9 11" stroke="#747474" stroke-width="1.2"/><rect x="29" y="0.5" width="12.5" height="11" rx="1" fill="#747474"/><path d="M29 4.2 L41.5 4.2 M29 7.8 L41.5 7.8" stroke="#fff" stroke-width="0.8"/></svg>
<div class="t" style="left:605px;top:504.0px;font-size:10px;color:#555">7</div>
<div class="t" style="left:635px;top:504.0px;font-size:10px;color:#555">2</div>
<svg class="ic" style="left:692px;top:504.5px" width="13" height="13" viewBox="0 0 13 13"><path d="M0 2 L5.8 1.2 L5.8 6 L0 6 Z M6.6 1.1 L13 0.2 L13 6 L6.6 6 Z M0 6.8 L5.8 6.8 L5.8 11.6 L0 10.8 Z M6.6 6.8 L13 6.8 L13 12.6 L6.6 11.7 Z" fill="#707070"/></svg>
<div class="t" style="left:757.5px;top:503.5px">Browser</div>
<div class="t" style="left:890.5px;top:503.5px">Automatic</div>
<div class="t" style="left:1024px;top:503.5px">Detected</div>
<div class="t" style="left:1090.5px;top:503.5px">Active</div>
<div class="t" style="left:1157px;top:503.5px;letter-spacing:-0.3px">CIS v8.0, CMMC 2.0 (U...</div>
<div class="t" style="left:1290px;top:503.5px">No</div>
<svg class="ic" style="left:1414.5px;top:501.5px" width="5" height="16" viewBox="0 0 5 16"><circle cx="2.5" cy="3.5" r="1.55" fill="#6a6a6a"/><circle cx="2.5" cy="8" r="1.55" fill="#6a6a6a"/><circle cx="2.5" cy="12.5" r="1.55" fill="#6a6a6a"/></svg>
<div class="a" style="left:211px;top:527px;width:1223px;height:1px;background:rgba(200,200,200,0.25)"></div>
<div class="a" style="left:211px;top:528px;width:1223px;height:1px;background:rgba(200,200,200,0.37)"></div>
<div class="cb" style="left:228px;top:538.3px"></div>
<div class="t" style="left:253px;top:536.8px">Internet Explorer: Turn on Cross-Sit...</div>
<div class="a" style="left:453px;top:540.8px;width:8px;height:8px;border-radius:50%;background:#e40010"></div>
<div class="t" style="left:466.5px;top:536.8px">High (100%)</div>
<svg class="ic" style="left:591px;top:538.8px" width="50" height="12" viewBox="0 0 50 12"><rect x="0.5" y="0.5" width="11" height="7.5" fill="#747474"/><path d="M6 8 L6 10.5 M3 11 L9 11" stroke="#747474" stroke-width="1.2"/><rect x="29" y="0.5" width="12.5" height="11" rx="1" fill="#747474"/><path d="M29 4.2 L41.5 4.2 M29 7.8 L41.5 7.8" stroke="#fff" stroke-width="0.8"/></svg>
<div class="t" style="left:605px;top:537.3px;font-size:10px;color:#555">7</div>
<div class="t" style="left:635px;top:537.3px;font-size:10px;color:#555">2</div>
<svg class="ic" style="left:692px;top:537.8px" width="13" height="13" viewBox="0 0 13 13"><path d="M0 2 L5.8 1.2 L5.8 6 L0 6 Z M6.6 1.1 L13 0.2 L13 6 L6.6 6 Z M0 6.8 L5.8 6.8 L5.8 11.6 L0 10.8 Z M6.6 6.8 L13 6.8 L13 12.6 L6.6 11.7 Z" fill="#707070"/></svg>
<div class="t" style="left:757.5px;top:536.8px">Browser</div>
<div class="t" style="left:890.5px;top:536.8px">Automatic</div>
<div class="t" style="left:1024px;top:536.8px">Detected</div>
<div class="t" style="left:1090.5px;top:536.8px">Active</div>
<div class="t" style="left:1157px;top:536.8px;letter-spacing:-0.3px">CIS v8.0, CMMC 2.0 (U...</div>
<div class="t" style="left:1290px;top:536.8px">No</div>
<svg class="ic" style="left:1414.5px;top:534.8px" width="5" height="16" viewBox="0 0 5 16"><circle cx="2.5" cy="3.5" r="1.55" fill="#6a6a6a"/><circle cx="2.5" cy="8" r="1.55" fill="#6a6a6a"/><circle cx="2.5" cy="12.5" r="1.55" fill="#6a6a6a"/></svg>
<div class="a" style="left:211px;top:560px;width:1223px;height:1px;background:rgba(200,200,200,0.04)"></div>
<div class="a" style="left:211px;top:561px;width:1223px;height:1px;background:rgba(200,200,200,0.58)"></div>
<div class="cb" style="left:228px;top:571.7px"></div>
<div class="t" style="left:253px;top:570.2px">Internet Explorer: Turn on Protected...</div>
<div class="a" style="left:453px;top:574.2px;width:8px;height:8px;border-radius:50%;background:#e40010"></div>
<div class="t" style="left:466.5px;top:570.2px">High (100%)</div>
<svg class="ic" style="left:591px;top:572.2px" width="50" height="12" viewBox="0 0 50 12"><rect x="0.5" y="0.5" width="11" height="7.5" fill="#747474"/><path d="M6 8 L6 10.5 M3 11 L9 11" stroke="#747474" stroke-width="1.2"/><rect x="29" y="0.5" width="12.5" height="11" rx="1" fill="#747474"/><path d="M29 4.2 L41.5 4.2 M29 7.8 L41.5 7.8" stroke="#fff" stroke-width="0.8"/></svg>
<div class="t" style="left:605px;top:570.7px;font-size:10px;color:#555">7</div>
<div class="t" style="left:635px;top:570.7px;font-size:10px;color:#555">2</div>
<svg class="ic" style="left:692px;top:571.2px" width="13" height="13" viewBox="0 0 13 13"><path d="M0 2 L5.8 1.2 L5.8 6 L0 6 Z M6.6 1.1 L13 0.2 L13 6 L6.6 6 Z M0 6.8 L5.8 6.8 L5.8 11.6 L0 10.8 Z M6.6 6.8 L13 6.8 L13 12.6 L6.6 11.7 Z" fill="#707070"/></svg>
<div class="t" style="left:757.5px;top:570.2px">Browser</div>
<div class="t" style="left:890.5px;top:570.2px">Automatic</div>
<div class="t" style="left:1024px;top:570.2px">Detected</div>
<div class="t" style="left:1090.5px;top:570.2px">Active</div>
<div class="t" style="left:1157px;top:570.2px;letter-spacing:-0.3px">CIS v8.0, CMMC 2.0 (U...</div>
<div class="t" style="left:1290px;top:570.2px">No</div>
<svg class="ic" style="left:1414.5px;top:568.2px" width="5" height="16" viewBox="0 0 5 16"><circle cx="2.5" cy="3.5" r="1.55" fill="#6a6a6a"/><circle cx="2.5" cy="8" r="1.55" fill="#6a6a6a"/><circle cx="2.5" cy="12.5" r="1.55" fill="#6a6a6a"/></svg>
<div class="a" style="left:211px;top:594px;width:1223px;height:1px;background:rgba(200,200,200,0.46)"></div>
<div class="a" style="left:211px;top:595px;width:1223px;height:1px;background:rgba(200,200,200,0.16)"></div>
<div class="cb" style="left:228px;top:605.0px"></div>
<div class="t" style="left:253px;top:603.5px">Internet Explorer: Allow drag and dr...</div>
<div class="a" style="left:453px;top:607.5px;width:8px;height:8px;border-radius:50%;background:#e40010"></div>
<div class="t" style="left:466.5px;top:603.5px">High (100%)</div>
<svg class="ic" style="left:591px;top:605.5px" width="50" height="12" viewBox="0 0 50 12"><rect x="0.5" y="0.5" width="11" height="7.5" fill="#747474"/><path d="M6 8 L6 10.5 M3 11 L9 11" stroke="#747474" stroke-width="1.2"/><rect x="29" y="0.5" width="12.5" height="11" rx="1" fill="#747474"/><path d="M29 4.2 L41.5 4.2 M29 7.8 L41.5 7.8" stroke="#fff" stroke-width="0.8"/></svg>
<div class="t" style="left:605px;top:604.0px;font-size:10px;color:#555">7</div>
<div class="t" style="left:635px;top:604.0px;font-size:10px;color:#555">2</div>
<svg class="ic" style="left:692px;top:604.5px" width="13" height="13" viewBox="0 0 13 13"><path d="M0 2 L5.8 1.2 L5.8 6 L0 6 Z M6.6 1.1 L13 0.2 L13 6 L6.6 6 Z M0 6.8 L5.8 6.8 L5.8 11.6 L0 10.8 Z M6.6 6.8 L13 6.8 L13 12.6 L6.6 11.7 Z" fill="#707070"/></svg>
<div class="t" style="left:757.5px;top:603.5px">Browser</div>
<div class="t" style="left:890.5px;top:603.5px">Automatic</div>
<div class="t" style="left:1024px;top:603.5px">Detected</div>
<div class="t" style="left:1090.5px;top:603.5px">Active</div>
<div class="t" style="left:1157px;top:603.5px;letter-spacing:-0.3px">CIS v8.0, CMMC 2.0 (U...</div>
<div class="t" style="left:1290px;top:603.5px">No</div>
<svg class="ic" style="left:1414.5px;top:601.5px" width="5" height="16" viewBox="0 0 5 16"><circle cx="2.5" cy="3.5" r="1.55" fill="#6a6a6a"/><circle cx="2.5" cy="8" r="1.55" fill="#6a6a6a"/><circle cx="2.5" cy="12.5" r="1.55" fill="#6a6a6a"/></svg>
<div class="a" style="left:211px;top:627px;width:1223px;height:1px;background:rgba(200,200,200,0.25)"></div>
<div class="a" style="left:211px;top:628px;width:1223px;height:1px;background:rgba(200,200,200,0.37)"></div>
<div class="cb" style="left:228px;top:638.3px"></div>
<div class="t" style="left:253px;top:636.8px">Boot-Start Driver</div>
<div class="a" style="left:453px;top:640.8px;width:8px;height:8px;border-radius:50%;background:#e40010"></div>
<div class="t" style="left:466.5px;top:636.8px">High (100%)</div>
<svg class="ic" style="left:591px;top:638.8px" width="50" height="12" viewBox="0 0 50 12"><rect x="0.5" y="0.5" width="11" height="7.5" fill="#747474"/><path d="M6 8 L6 10.5 M3 11 L9 11" stroke="#747474" stroke-width="1.2"/><rect x="29" y="0.5" width="12.5" height="11" rx="1" fill="#747474"/><path d="M29 4.2 L41.5 4.2 M29 7.8 L41.5 7.8" stroke="#fff" stroke-width="0.8"/></svg>
<div class="t" style="left:605px;top:637.3px;font-size:10px;color:#555">7</div>
<div class="t" style="left:635px;top:637.3px;font-size:10px;color:#555">2</div>
<svg class="ic" style="left:692px;top:637.8px" width="13" height="13" viewBox="0 0 13 13"><path d="M0 2 L5.8 1.2 L5.8 6 L0 6 Z M6.6 1.1 L13 0.2 L13 6 L6.6 6 Z M0 6.8 L5.8 6.8 L5.8 11.6 L0 10.8 Z M6.6 6.8 L13 6.8 L13 12.6 L6.6 11.7 Z" fill="#707070"/></svg>
<div class="t" style="left:757.5px;top:636.8px">OS</div>
<div class="t" style="left:890.5px;top:636.8px">Automatic</div>
<div class="t" style="left:1024px;top:636.8px">Detected</div>
<div class="t" style="left:1090.5px;top:636.8px">Active</div>
<div class="t" style="left:1157px;top:636.8px;letter-spacing:-0.3px">CIS v8.0, CMMC 2.0 (U...</div>
<div class="t" style="left:1290px;top:636.8px">No</div>
<svg class="ic" style="left:1414.5px;top:634.8px" width="5" height="16" viewBox="0 0 5 16"><circle cx="2.5" cy="3.5" r="1.55" fill="#6a6a6a"/><circle cx="2.5" cy="8" r="1.55" fill="#6a6a6a"/><circle cx="2.5" cy="12.5" r="1.55" fill="#6a6a6a"/></svg>
<div class="a" style="left:211px;top:660px;width:1223px;height:1px;background:rgba(200,200,200,0.04)"></div>
<div class="a" style="left:211px;top:661px;width:1223px;height:1px;background:rgba(200,200,200,0.58)"></div>
<div class="cb" style="left:228px;top:671.6px"></div>
<div class="t" style="left:253px;top:670.1px">Internet Explorer: Allow scripting of ...</div>
<div class="a" style="left:453px;top:674.1px;width:8px;height:8px;border-radius:50%;background:#e40010"></div>
<div class="t" style="left:466.5px;top:670.1px">High (100%)</div>
<svg class="ic" style="left:591px;top:672.1px" width="50" height="12" viewBox="0 0 50 12"><rect x="0.5" y="0.5" width="11" height="7.5" fill="#747474"/><path d="M6 8 L6 10.5 M3 11 L9 11" stroke="#747474" stroke-width="1.2"/><rect x="29" y="0.5" width="12.5" height="11" rx="1" fill="#747474"/><path d="M29 4.2 L41.5 4.2 M29 7.8 L41.5 7.8" stroke="#fff" stroke-width="0.8"/></svg>
<div class="t" style="left:605px;top:670.6px;font-size:10px;color:#555">7</div>
<div class="t" style="left:635px;top:670.6px;font-size:10px;color:#555">2</div>
<svg class="ic" style="left:692px;top:671.1px" width="13" height="13" viewBox="0 0 13 13"><path d="M0 2 L5.8 1.2 L5.8 6 L0 6 Z M6.6 1.1 L13 0.2 L13 6 L6.6 6 Z M0 6.8 L5.8 6.8 L5.8 11.6 L0 10.8 Z M6.6 6.8 L13 6.8 L13 12.6 L6.6 11.7 Z" fill="#707070"/></svg>
<div class="t" style="left:757.5px;top:670.1px">Browser</div>
<div class="t" style="left:890.5px;top:670.1px">Automatic</div>
<div class="t" style="left:1024px;top:670.1px">Detected</div>
<div class="t" style="left:1090.5px;top:670.1px">Active</div>
<div class="t" style="left:1157px;top:670.1px;letter-spacing:-0.3px">CIS v8.0, CMMC 2.0 (U...</div>
<div class="t" style="left:1290px;top:670.1px">No</div>
<svg class="ic" style="left:1414.5px;top:668.1px" width="5" height="16" viewBox="0 0 5 16"><circle cx="2.5" cy="3.5" r="1.55" fill="#6a6a6a"/><circle cx="2.5" cy="8" r="1.55" fill="#6a6a6a"/><circle cx="2.5" cy="12.5" r="1.55" fill="#6a6a6a"/></svg>
<div class="a" style="left:1897px;top:213px;width:6px;height:134px;background:#dcdcdc;border-radius:3px"></div>
<div class="arr" style="left:1896px;top:202px;border-top:none;border-bottom:5px solid #d0d0d0;border-left-width:4px;border-right-width:4px"></div>
<div class="a" style="left:948px;top:192.5px;width:200px;height:289px;background:#fff;border:1px solid #3a86e6;border-radius:3px;z-index:20">
<div class="a" style="left:6px;top:10px;width:185px;height:26px;border:1.5px solid #2d6fd4;border-radius:4px"></div>
<div class="a" style="left:17px;top:16px;width:1.5px;height:14px;background:#333"></div>
<div class="a" style="left:19px;top:15px;font-size:10.3px;line-height:16px;font-style:italic;color:#a0a0a0">Type here</div>
<svg class="ic" style="left:171px;top:16px" width="13" height="13" viewBox="0 0 13 13"><circle cx="5.2" cy="5.2" r="4" stroke="#777" stroke-width="1.3" fill="none"/><path d="M8.2 8.2 L12 12" stroke="#777" stroke-width="1.5"/></svg>
<div class="a" style="left:7px;top:50.5px;width:14px;height:14px;background:#0a6cf0;border-radius:2px"><svg width="14" height="14" viewBox="0 0 14 14" style="position:absolute;left:0;top:0"><path d="M3.2 7.2 L5.8 9.8 L10.8 4.3" stroke="#fff" stroke-width="1.2" fill="none"/></svg></div>
<div class="a" style="left:29px;top:49.5px;font-size:11.5px;line-height:16px;color:#3c3c3c">Cyber Essentials v3.2 (UK)</div>
<div class="a" style="left:7px;top:77.2px;width:14px;height:14px;background:#0a6cf0;border-radius:2px"><svg width="14" height="14" viewBox="0 0 14 14" style="position:absolute;left:0;top:0"><path d="M3.2 7.2 L5.8 9.8 L10.8 4.3" stroke="#fff" stroke-width="1.2" fill="none"/></svg></div>
<div class="a" style="left:29px;top:76.2px;font-size:11.5px;line-height:16px;color:#3c3c3c">Essential Eight v2023.11 (...</div>
<div class="a" style="left:7px;top:104.0px;width:14px;height:14px;border:1.3px solid #6a6a6a;border-radius:2px"></div>
<div class="a" style="left:29px;top:103.0px;font-size:11.5px;line-height:16px;color:#3c3c3c">Cyber Hygiene - Windows</div>
<div class="a" style="left:7px;top:130.8px;width:14px;height:14px;border:1.3px solid #6a6a6a;border-radius:2px"></div>
<div class="a" style="left:29px;top:129.8px;font-size:11.5px;line-height:16px;color:#3c3c3c">CIS v8.0</div>
<div class="a" style="left:7px;top:157.5px;width:14px;height:14px;border:1.3px solid #6a6a6a;border-radius:2px"></div>
<div class="a" style="left:29px;top:156.5px;font-size:11.5px;line-height:16px;color:#3c3c3c">CMMC 2.0 (US)</div>
<div class="a" style="left:7px;top:184.2px;width:14px;height:14px;border:1.3px solid #6a6a6a;border-radius:2px"></div>
<div class="a" style="left:29px;top:183.2px;font-size:11.5px;line-height:16px;color:#3c3c3c">DORA (EU)</div>
<div class="a" style="left:7px;top:211.0px;width:14px;height:14px;border:1.3px solid #6a6a6a;border-radius:2px"></div>
<div class="a" style="left:29px;top:210.0px;font-size:11.5px;line-height:16px;color:#3c3c3c">GDPR (EU)</div>
<div class="a" style="left:7px;top:237.8px;width:14px;height:14px;border:1.3px solid #6a6a6a;border-radius:2px"></div>
<div class="a" style="left:29px;top:236.8px;font-size:11.5px;line-height:16px;color:#3c3c3c">HIPAA (US)</div>
<div class="arr" style="left:188px;top:53px;border-top:none;border-bottom:5px solid #d8d8d8;border-left-width:4px;border-right-width:4px"></div>
<div class="a" style="left:189px;top:65px;width:6px;height:116px;background:#d9d9d9;border-radius:3px"></div>
<div class="arr" style="left:188px;top:247px;border-top:5px solid #d8d8d8;border-left-width:4px;border-right-width:4px"></div>
<div class="a" style="left:0;top:258px;width:198px;height:1px;background:#e0e0e0"></div>
<div class="a" style="left:14px;top:267px;font-size:9.6px;line-height:14px;color:#666;letter-spacing:-0.1px">CLEAR SELECTION</div>
<div class="a" style="left:153px;top:267px;font-size:9.6px;line-height:14px;color:#2f7de8;letter-spacing:0.2px">APPLY</div>
</div>
<div class="hl" style="left:941px;top:148px;width:216px;height:159px"></div>
</body></html>
